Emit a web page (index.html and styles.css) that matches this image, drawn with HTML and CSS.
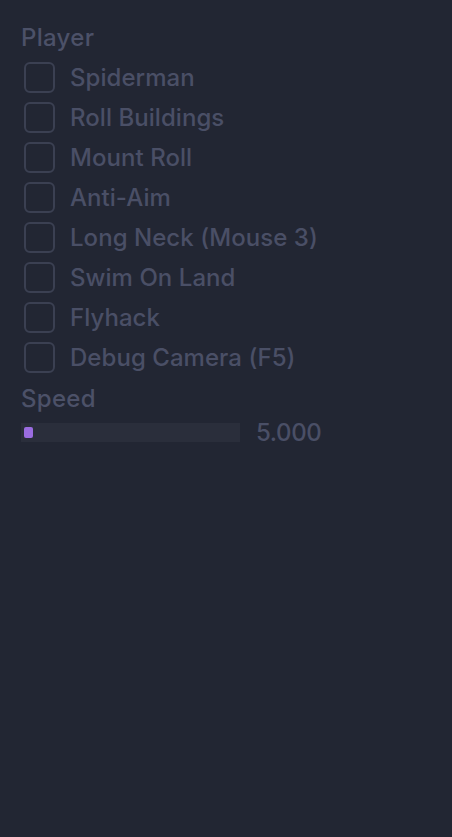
FILE: index.html
```html
<!DOCTYPE html>
<html lang="en">
<head>
    <meta charset="UTF-8">
    <meta name="viewport" content="width=device-width, initial-scale=1.0">
    <title>Player</title>
    <link rel="stylesheet" href="styles.css">
</head>
<body>
    <div class="panel">
        <div class="section-title">Player</div>

        <!-- Toggles -->
        <div class="toggle-list">
            <label class="toggle"><span class="box"></span><span class="toggle-text">Spiderman</span></label>
            <label class="toggle"><span class="box"></span><span class="toggle-text">Roll Buildings</span></label>
            <label class="toggle"><span class="box"></span><span class="toggle-text">Mount Roll</span></label>
            <label class="toggle"><span class="box"></span><span class="toggle-text">Anti-Aim</span></label>
            <label class="toggle"><span class="box"></span><span class="toggle-text">Long Neck (Mouse 3)</span></label>
            <label class="toggle"><span class="box"></span><span class="toggle-text">Swim On Land</span></label>
            <label class="toggle"><span class="box"></span><span class="toggle-text">Flyhack</span></label>
            <label class="toggle"><span class="box"></span><span class="toggle-text">Debug Camera (F5)</span></label>
        </div>

        <!-- Speed slider -->
        <div class="section-title speed-title">Speed</div>
        <div class="slider-row">
            <div class="slider-track">
                <span class="slider-grab"></span>
            </div>
            <span class="slider-value">5.000</span>
        </div>
    </div>
</body>
</html>
```

FILE: styles.css
```css
body {
    margin: 0;
    padding: 0;
    background-color: #222633;
    font-family: 'Inter', 'Noto Sans', sans-serif;
    font-weight: 500;
    color: #4a4f66;
}

.panel {
    padding: 23px 21px;
}

.section-title {
    font-size: 24px;
    line-height: 29px;
    letter-spacing: 0.3px;
    color: #4c5168;
}

/* Checkbox rows */
.toggle-list {
    display: flex;
    flex-direction: column;
    gap: 10px;
    margin-top: 10px;
}

.toggle {
    display: flex;
    align-items: center;
    gap: 15px;
    height: 30px;
    font-size: 24px;
    padding-left: 3px;
}

.toggle-text {
    line-height: 28px;
    padding-top: 2px;
    letter-spacing: 0.05px;
}

.box {
    width: 27px;
    height: 27px;
    border: 2px solid #3b4052;
    border-radius: 6px;
    flex-shrink: 0;
}

.speed-title {
    margin-top: 12px;
}

/* Slider */
.slider-row {
    display: flex;
    align-items: center;
    gap: 16px;
    margin-top: 10px;
}

.slider-track {
    width: 219px;
    height: 19px;
    background-color: #2a2e3b;
    display: flex;
    align-items: center;
    padding-left: 3px;
    box-sizing: border-box;
}

.slider-grab {
    width: 9px;
    height: 11px;
    border-radius: 2px;
    background-color: #9a6ce0;
}

.slider-value {
    font-size: 24px;
    line-height: 19px;
    letter-spacing: -0.4px;
}
```
